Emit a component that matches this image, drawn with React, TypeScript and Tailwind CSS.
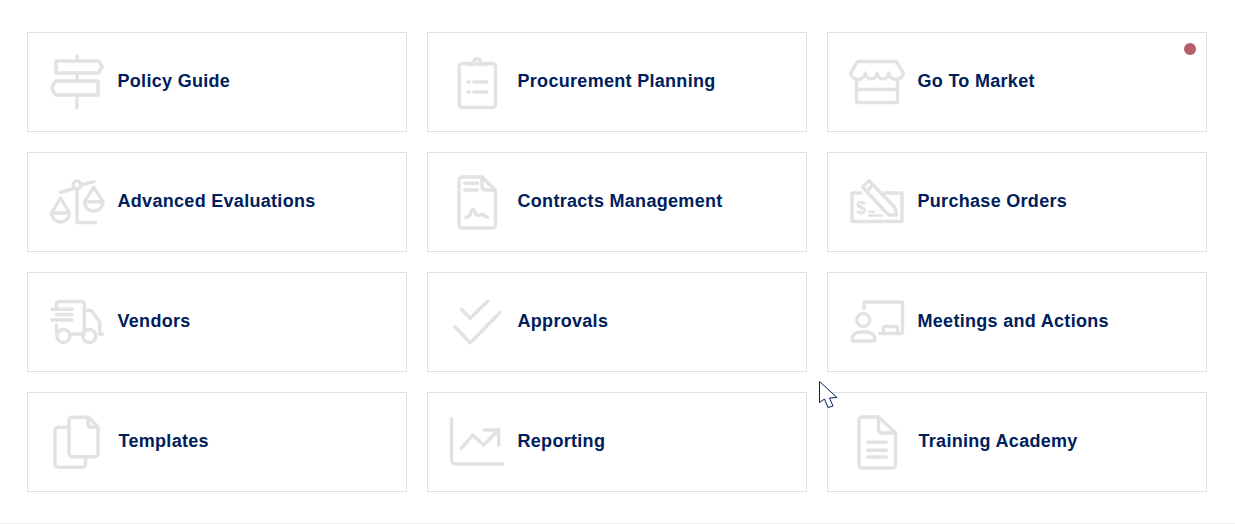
import type { ReactNode } from "react";

const cards: { title: string; gap: string; icon: ReactNode; dot?: boolean }[] = [
  {
    title: "Policy Guide",
    gap: "gap-[11px]",
    icon: (
      <>
        <path d="M30 4v4.500M30 21.500v7M30 43v12.500" />
        <path d="M9 9h42.500l3.700 6-3.700 6H9z" />
        <path d="M8.500 29H51v14H8.500l-3.700-7z" />
      </>
    ),
  },
  {
    title: "Procurement Planning",
    gap: "gap-[11px]",
    icon: (
      <>
        <rect x="12.200" y="11.500" width="36.300" height="44" rx="3" />
        <path d="M21 12.500h6.500a3.500 3.500 0 1 1 5 0H39" />
        <path d="M26.700 30H40M26.700 40H40" />
        <path d="M21 30h1M21 40h1" />
      </>
    ),
  },
  {
    title: "Go To Market",
    gap: "gap-[11px]",
    dot: true,
    icon: (
      <>
        <path d="M3.700 21 10.500 9.500h39L56.300 21a7.300 6.500 0 0 1-14.600 0 5.850 5.850 0 0 1-11.700 0 5.850 5.850 0 0 1-11.700 0 7.300 6.500 0 0 1-14.600 0z" />
        <path d="M9.500 28v21a1.500 1.500 0 0 0 1.500 1.500h38a1.500 1.500 0 0 0 1.500-1.500V28M9.500 37.500h41" />
      </>
    ),
  },
  {
    title: "Advanced Evaluations",
    gap: "gap-[11px]",
    icon: (
      <>
        <circle cx="30" cy="13" r="4" />
        <path d="M30 17v33.500h18.500M13.500 20.400l12.800-3.700M34 13l13-3.300" />
        <path d="M4.500 41h18a9 9 0 0 1-18 0zM4.500 41l9-15 9 15" />
        <path d="M37.500 29.800h18.500a9.250 9.250 0 0 1-18.500 0zM37.500 29.800l9.200-14.500 9.300 14.500" />
      </>
    ),
  },
  {
    title: "Contracts Management",
    gap: "gap-[11px]",
    icon: (
      <>
        <path d="M35 5H15a3 3 0 0 0-3 3v45a3 3 0 0 0 3 3h30.500a3 3 0 0 0 3-3V18.500z" />
        <path d="M35 5v10a3 3 0 0 0 3 3h10.500" />
        <path d="M17.500 11.300h13M17.500 18h13" />
        <path d="M19 45.500c2.500-.5 4-1.500 5-5 .8-3 2.800-4.500 3.800-1 1 4 2.500 4.500 4.500 3.500 2.500-1.500 4.500-.5 8.500 2.500" />
      </>
    ),
  },
  {
    title: "Purchase Orders",
    gap: "gap-[11px]",
    icon: (
      <>
        <path d="M13.500 21H5v28.500h50V21H37" />
        <path d="M15.500 15 22 8.700 48 35.500 49.500 43H41.500z" />
        <path d="M19.500 19.500 25.500 13.500" />
        <path d="M22 39.700h5M22 43.500h13" strokeWidth="2.500" />
        <text x="9" y="42" fontSize="18" fontWeight="700" fontFamily="'Liberation Sans', sans-serif" fill="#e2e2e2" stroke="none">$</text>
      </>
    ),
  },
  {
    title: "Vendors",
    gap: "gap-[11px]",
    icon: (
      <>
        <path d="M9.500 15v-3a2.500 2.500 0 0 1 2.500-2.500h22.500a2.800 2.800 0 0 1 2.800 2.800V41.300M9.500 33v7.500l1 2" />
        <path d="M37.300 18.500h7l8.500 11.500v12.300h2.700M22.500 42h14.800" />
        <path d="M5 17.300h20M9.500 22.500H25M5 28h20" />
        <circle cx="16.500" cy="44" r="6.500" />
        <circle cx="42.300" cy="44" r="6.500" />
      </>
    ),
  },
  {
    title: "Approvals",
    gap: "gap-[11px]",
    icon: (
      <>
        <path d="m14.300 17.300 9 9L40.700 9" />
        <path d="m7.700 34.700 15.600 16 29.400-30" />
      </>
    ),
  },
  {
    title: "Meetings and Actions",
    gap: "gap-[11px]",
    icon: (
      <>
        <path d="M17 16.500v-5a1.500 1.500 0 0 1 1.500-1.500h35.500a1.500 1.500 0 0 1 1.500 1.500v28.500a1.500 1.500 0 0 1-1.500 1.500H33" />
        <path d="M36.500 41v-5a1.500 1.500 0 0 1 1.500-1.500h11a1.500 1.500 0 0 1 1.500 1.500v5" />
        <circle cx="16.300" cy="28" r="6.500" />
        <path d="M5 47.500c0-4.500 4-7.500 8-7.500h6.500c4.500 0 8.500 3 8.500 7.500 0 1-.5 1.500-1.500 1.500h-20C5.500 49 5 48.500 5 47.500z" />
      </>
    ),
  },
  {
    title: "Templates",
    gap: "gap-[12px]",
    icon: (
      <>
        <path d="M41.500 5.200H25a3 3 0 0 0-3 3v33.500a3 3 0 0 0 3 3h23a3 3 0 0 0 3-3V15z" />
        <path d="M41 5.500v7a2.500 2.500 0 0 0 2.500 2.500H51" />
        <path d="M22 15.200H11a3 3 0 0 0-3 3v34a3 3 0 0 0 3 3h24.500a3 3 0 0 0 3-3v-7.500" />
      </>
    ),
  },
  {
    title: "Reporting",
    gap: "gap-[11px]",
    icon: (
      <>
        <path d="M4.500 7v41a4 4 0 0 0 4 4h47" />
        <path d="m14.300 36.300 11.400-13.300 11 10 15-15" />
        <path d="M37.300 18h14.400v15" />
      </>
    ),
  },
  {
    title: "Training Academy",
    gap: "gap-[12px]",
    icon: (
      <>
        <path d="M31.500 5H15a3 3 0 0 0-3 3v45a3 3 0 0 0 3 3h30.500a3 3 0 0 0 3-3V21z" />
        <path d="M31.500 5v12.500a3.500 3.500 0 0 0 3.500 3.500h13.500" />
        <path d="M20.700 30.300h18.600M20.700 38.300h18.600M20.700 45h18.600" />
      </>
    ),
  },
];

export default function App() {
  return (
    <div className="relative box-border h-[524px] border-b border-[#f3f3f3] bg-white pl-[27px] pt-8 font-['Liberation_Sans',Arial,sans-serif]">
      <div className="grid w-[1180px] grid-cols-3 gap-5">
        {cards.map((card) => (
          <div
            key={card.title}
            className={`relative box-border flex h-[100px] items-center border border-[#e0e0e0] pl-[19px] ${card.gap}`}
          >
            <svg
              viewBox="0 0 60 60"
              className="h-[60px] w-[60px] shrink-0"
              fill="none"
              stroke="#e2e2e2"
              strokeWidth="3.400"
              strokeLinecap="round"
              strokeLinejoin="round"
            >
              {card.icon}
            </svg>
            <span className="-ml-[0.5px] pb-[2px] text-lg font-bold tracking-[0.3px] text-[#00205b]">
              {card.title}
            </span>
            {card.dot && (
              <span className="absolute right-[10px] top-[10px] h-3 w-3 rounded-full bg-[#b85c6b]" />
            )}
          </div>
        ))}
      </div>
      {/* mouse pointer caught in the shot */}
      <svg viewBox="0 0 20 30" className="absolute left-[818px] top-[380px] h-[30px] w-[20px]">
        <path
          d="M1.500 1.500v21l5-3.500 3.500 8.500 5-1.500-3.500-8 7.500-.5z"
          fill="#fff"
          stroke="#00205b"
          strokeWidth="1"
          strokeLinejoin="miter"
        />
      </svg>
    </div>
  );
}
